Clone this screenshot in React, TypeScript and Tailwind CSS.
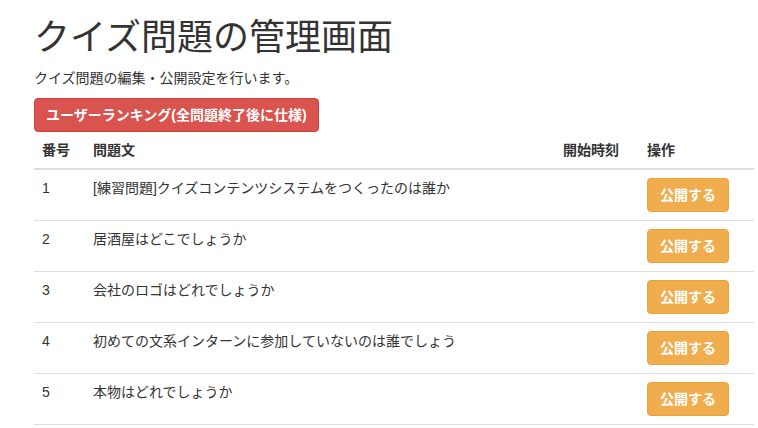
import React from 'react';

const quizzes = [
  { id: 1, text: '[練習問題]クイズコンテンツシステムをつくったのは誰か' },
  { id: 2, text: '居酒屋はどこでしょうか' },
  { id: 3, text: '会社のロゴはどれでしょうか' },
  { id: 4, text: '初めての文系インターンに参加していないのは誰でしょう' },
  { id: 5, text: '本物はどれでしょうか' },
];

export default function App() {
  return (
    <div
      className="w-[758px] h-[428px] overflow-hidden bg-white text-[#333] text-[14px] leading-[20px]"
      style={{ fontFamily: '"Liberation Sans", "Noto Sans CJK JP", sans-serif' }}
    >
      <div className="ml-[34px] w-[720px]">
        <h1 className="mt-[18px] mb-[10px] text-[36px] leading-[40px] font-normal text-[#333]">クイズ問題の管理画面</h1>
        <p className="mb-[10px]">クイズ問題の編集・公開設定を行います。</p>
        <button className="h-[34px] px-[11px] rounded border border-[#d43f3a] bg-[#d9534f] text-white font-bold text-[14px]">
          ユーザーランキング(全問題終了後に仕様)
        </button>

        {/* 問題一覧 */}
        <table className="w-full border-collapse">
          <thead>
            <tr className="border-b-2 border-[#ddd] text-left">
              <th className="w-[51px] p-2 font-bold">番号</th>
              <th className="p-2 font-bold">問題文</th>
              <th className="w-[85px] p-2 font-bold">開始時刻</th>
              <th className="w-[114px] p-2 pl-[7px] font-bold">操作</th>
            </tr>
          </thead>
          <tbody>
            {quizzes.map(q => (
              <tr key={q.id} className="border-b border-[#ddd] align-top">
                <td className="p-2">{q.id}</td>
                <td className="p-2">{q.text}</td>
                <td className="p-2"></td>
                <td className="p-2 pl-[7px]">
                  <button className="h-[34px] px-3 rounded border border-[#eea236] bg-[#f0ad4e] text-white font-bold text-[14px]">
                    公開する
                  </button>
                </td>
              </tr>
            ))}
          </tbody>
        </table>
      </div>
    </div>
  );
}
